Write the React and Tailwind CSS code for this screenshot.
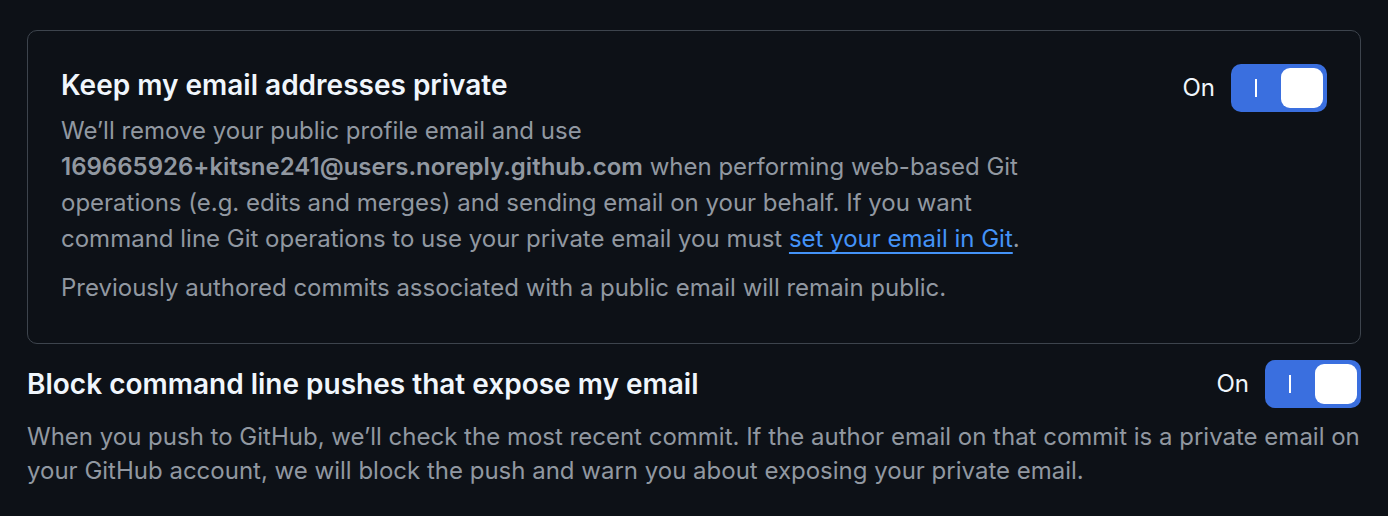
import React from "react";

const Toggle = () => (
  <div className="flex items-center gap-[16px]">
    <span className="text-[24px] text-[#f0f6fc]">On</span>
    <button className="flex h-[48px] w-[96px] items-center rounded-[10px] bg-[#3a6fdf] p-[4px]">
      <span className="flex w-[42px] justify-center">
        <span className="h-[18px] w-[2px] bg-white" />
      </span>
      <span className="ml-auto h-[40px] w-[42px] rounded-[9px] bg-white" />
    </button>
  </div>
);

export default function App() {
  return (
    <div
      className="min-h-screen bg-[#0d1117] px-[27px] pt-[30px] text-[#9198a1]"
      style={{ fontFamily: "Inter, 'Noto Sans', sans-serif" }}
    >
      <div className="rounded-[10px] border border-[#3d444d] px-[33px] pt-[32px] pb-[37px]">
        <div className="flex items-start justify-between">
          <div className="max-w-[980px]">
            <h2 className="text-[28px] font-semibold leading-[44px] text-[#f0f6fc]">
              Keep my email addresses private
            </h2>
            <p className="mt-[6px] text-[24px] leading-[36px]">
              We’ll remove your public profile email and use{" "}
              <strong className="font-semibold">169665926+kitsne241@users.noreply.github.com</strong>{" "}
              when performing web-based Git operations (e.g. edits and merges) and sending email on
              your behalf. If you want command line Git operations to use your private email you
              must{" "}
              <a href="#" className="text-[#4493f8] underline decoration-2 underline-offset-[5px]">
                set your email in Git
              </a>
              .
            </p>
            <p className="mt-[13px] text-[24px] leading-[36px]">
              Previously authored commits associated with a public email will remain public.
            </p>
          </div>
          <div className="pt-[1px]">
            <Toggle />
          </div>
        </div>
      </div>

      <div className="mt-[16px] flex items-center justify-between">
        <h2 className="text-[28px] font-semibold text-[#f0f6fc]">
          Block command line pushes that expose my email
        </h2>
        <Toggle />
      </div>
      <p className="mt-[12px] text-[24px] leading-[34px]">
        When you push to GitHub, we’ll check the most recent commit. If the author email on that
        commit is a private email on your GitHub account, we will block the push and warn you about
        exposing your private email.
      </p>
    </div>
  );
}
